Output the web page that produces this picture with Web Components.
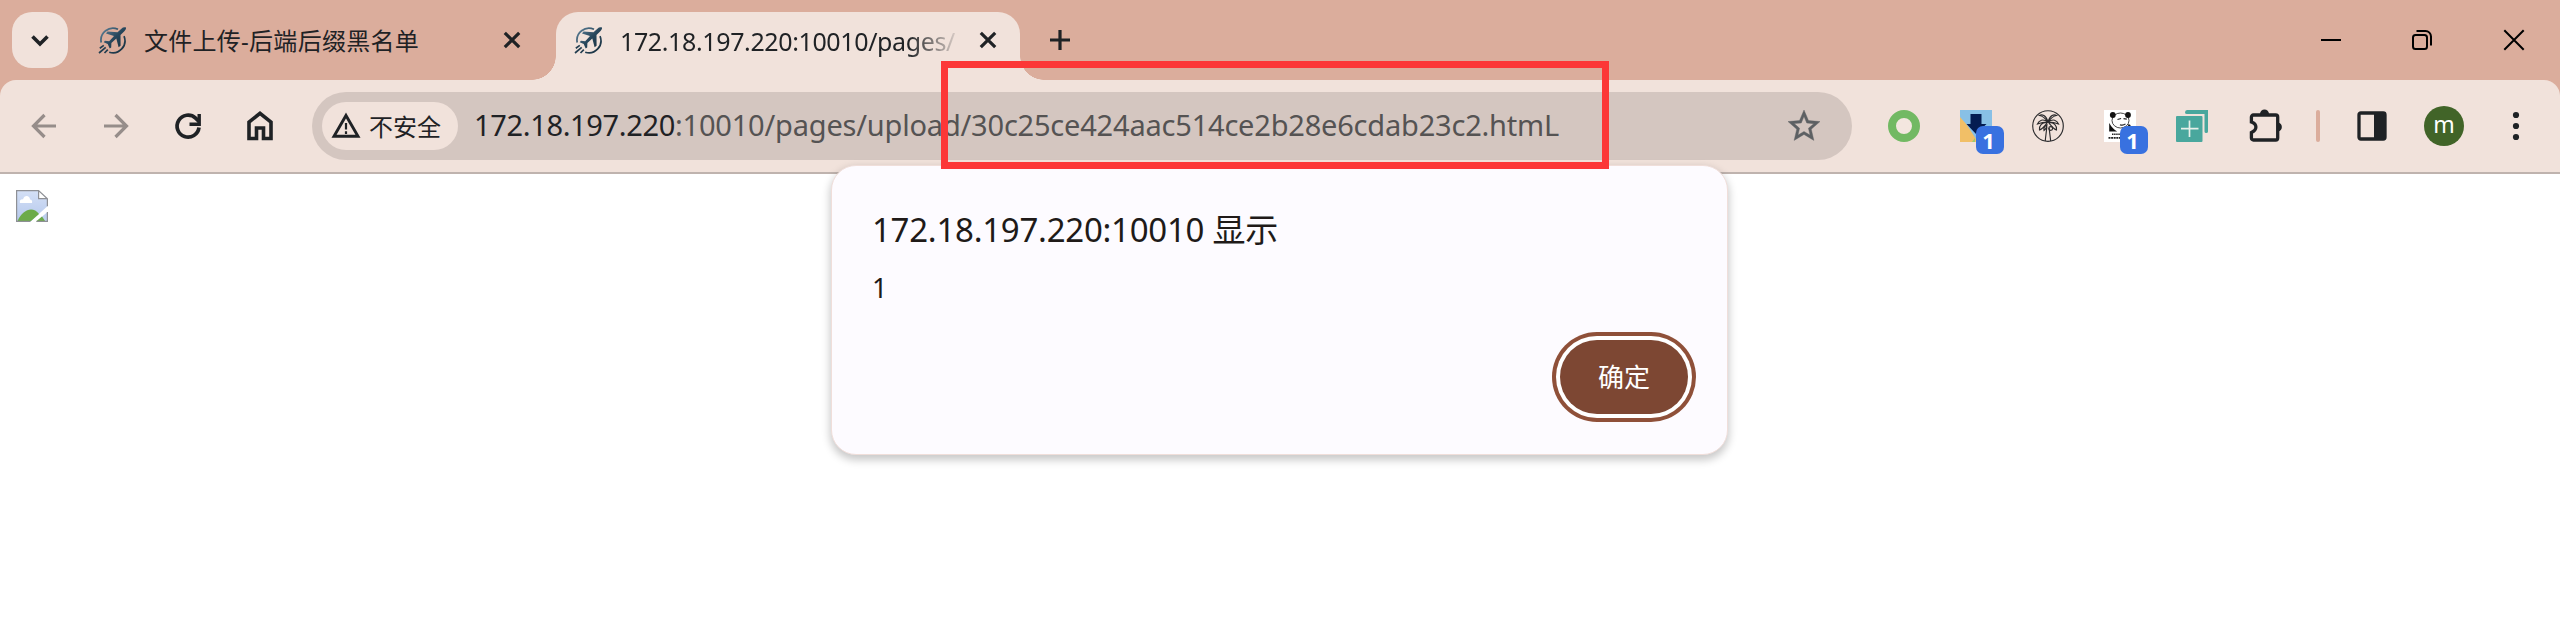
<!DOCTYPE html>
<html lang="zh-CN">
<head>
<meta charset="utf-8">
<title>172.18.197.220:10010/pages/upload</title>
<style>
html,body{margin:0;height:100%;overflow:hidden;background:#fff}
body{font-family:"Noto Sans","Noto Sans CJK SC",sans-serif;color:#1f2225}
</style>
</head>
<body>
<browser-window></browser-window>
<script>
function define(name, html, init) {
  customElements.define(name, class extends HTMLElement {
    constructor() {
      super();
      const t = document.createElement('template');
      t.innerHTML = html;
      this.attachShadow({mode: 'open'}).append(t.content.cloneNode(true));
    }
    connectedCallback() { if (init) init.call(this, this.shadowRoot); }
  });
}

/* Text tracked so that its line spans the given width */
define('fit-text', `<style>:host{display:inline-block;white-space:nowrap}span{display:inline-block;white-space:pre}</style><span></span>`, function (root) {
  const s = root.querySelector('span');
  s.textContent = this.getAttribute('text');
  const w = parseFloat(this.getAttribute('w'));
  const n = [...s.textContent].length;
  s.style.letterSpacing = (w - s.getBoundingClientRect().width) / n + 'px';
});

const icons = {
  chevron: ['0 0 32 32', '<path d="M8.500 12.500l7.500 7.500 7.500-7.500" fill="none" stroke="#1f2225" stroke-width="3.600"/>'],
  plane: ['0 0 28 28', '<defs><linearGradient id="g" x1="0" y1="0" x2="1" y2="1"><stop offset="0" stop-color="#5f8299"/><stop offset=".5" stop-color="#27465b"/><stop offset="1" stop-color="#18303f"/></linearGradient></defs><path d="M3.2 15.5A12 12 0 0 1 20 2.3M26 9.2A12 12 0 0 1 11.2 25.2" fill="none" stroke="url(#g)" stroke-width="1.7"/><path d="M28 .5c-1.700-.6-3.200-.2-4.600 1.200L19.500 5.300 9.500 4.600 8 6.400l8 2.700-4.800 5.200-4.300-.5-1.200 1.400 4 1.800 2 4.400 1.500-1 .2-4.400 4.900-4.500 2.300 8.700 2-1.500-.1-10.600 3.600-3.600C27.300 3.200 28.300 1.900 28 .5z" fill="url(#g)"/><path d="M5.800 18.400L1.800 21.200M7.700 20.400L1 26M9.800 22.600L6.500 26" stroke="#233e50" stroke-width="1.700"/>'],
  close: ['0 0 32 32', '<path d="M8.800 8.800l14.400 14.400M23.200 8.800L8.800 23.200" stroke="#1f2225" stroke-width="3.200"/>'],
  plus: ['0 0 32 32', '<path d="M16 6v20M6 16h20" stroke="#1f2225" stroke-width="3.200"/>'],
  min: ['0 0 32 32', '<path d="M7 16h20" stroke="#000" stroke-width="2"/>'],
  restore: ['0 0 32 32', '<g fill="none" stroke="#000" stroke-width="2"><rect x="7" y="11" width="14" height="14" rx="2.500"/><path d="M10.500 7H19.500a5.500 5.500 0 0 1 5.500 5.500V21.500"/></g>'],
  wclose: ['0 0 32 32', '<path d="M6.300 6.300l19.400 19.400M25.700 6.300L6.300 25.700" stroke="#000" stroke-width="2"/>'],
  back: ['0 0 32 32', '<path d="M28 16H6.500M16.500 5L5.500 16l11 11" fill="none" stroke="#968d8a" stroke-width="3.200"/>'],
  forward: ['0 0 32 32', '<path d="M4 16h21.500M15.500 5l11 11-11 11" fill="none" stroke="#968d8a" stroke-width="3.200"/>'],
  reload: ['0 0 32 32', '<path d="M27 17.500A11 11 0 1 1 23.600 8.100L27 11.500" fill="none" stroke="#1f2225" stroke-width="3.700"/><path d="M27.200 4v10.200H17.500" fill="none" stroke="#1f2225" stroke-width="3.400"/>'],
  home: ['0 0 32 32', '<path d="M5 28.500V12.200L16 3.300l11 8.900v16.300h-7.500V18h-7v10.500z" fill="none" stroke="#1f2225" stroke-width="3.600"/>'],
  warn: ['0 0 32 32', '<path d="M16 5.500L28 26.300H4z" fill="none" stroke="#1f2225" stroke-width="2.900"/><path d="M16 13v6.500M16 21.300v2.600" stroke="#1f2225" stroke-width="2.200"/>'],
  star: ['2 2 20 20', '<path d="M22 9.240l-7.190-.62L12 2 9.190 8.630 2 9.240l5.460 4.730L5.820 21 12 17.270 18.180 21l-1.630-7.030L22 9.240zM12 15.400l-3.760 2.270 1-4.280-3.320-2.880 4.380-.38L12 6.100l1.710 4.040 4.380.38-3.320 2.880 1 4.280L12 15.400z" fill="#5d6063" stroke="#5d6063" stroke-width=".25"/>'],
  ring: ['0 0 32 32', '<circle cx="16" cy="16" r="12" fill="#f3e6df" stroke="#72b963" stroke-width="8"/>'],
  download: ['0 0 32 32', '<path d="M0 0h32v32H0z" fill="#88c0e6"/><path d="M0 7l7 8 9 14v3H0z" fill="#f1bf67"/><path d="M10.500 4h11v10h5L16 24 6.500 14h4z" fill="#051c52"/><path d="M12 32l3-4v4z" fill="#9bcb72"/>'],
  palm: ['0 0 32 32', '<g fill="none" stroke="#2b2b2d" stroke-width="1.150"><circle cx="16" cy="16" r="15.300"/><path d="M13.200 31l1.700-14.500M18.700 31l-1.600-13M16 12C14 5 10 4 7.500 5.500 11 6 13 8 16 12zM16 12c2-7 6-8 8.500-6.500C21 6 19 8 16 12zM16 12C11 8.500 7 10 5.500 14 9 12.500 12 12 16 12zM16 12c5-3.500 9-2 10.500 2C23 12.500 20 12 16 12zM15.500 12.500C10 12 7 15.500 7.500 20c3-1 5-4 8-7.500zM16.500 12.500C22 12 25 15.500 24.500 20c-3-1-5-4-8-7.500zM15 15c-2.500 1-3.500 3-3 5.500 1.500-1 2.500-2.500 3-5.500z"/><circle cx="18.700" cy="18.500" r="1.900"/></g>'],
  panda: ['0 0 32 32', '<path d="M0 0h32v32H0z" fill="#fff"/><path d="M5.200 13c1.500 2 2.500 5 8 8.500H5.200zM24.500 14l2 1v6h-4z" fill="#111"/><ellipse cx="16.500" cy="10.500" rx="8.500" ry="7.500" fill="#fff" stroke="#333" stroke-width=".9"/><circle cx="8.800" cy="5" r="2.900" fill="#111"/><circle cx="24" cy="5" r="2.900" fill="#111"/><path d="M13.500 9.500l3.600-1M19.500 8.700l3.300.5M16 14.700c2 .9 4 .4 5.500-.8" stroke="#222" stroke-width="1.200" fill="none"/><path d="M8 24.300h8" stroke="#222" stroke-width="1.600" stroke-dasharray="1.500 .6"/><path d="M4.500 27.800H16" stroke="#222" stroke-width="1.800" stroke-dasharray="2 .6"/>'],
  teal: ['0 0 32 32', '<rect y="6" width="26.500" height="26" rx="1" fill="#49a79d"/><path d="M13.500 10.500v16.500M5 18.700h17.500" stroke="#e7efe9" stroke-width="1.700"/><path d="M9 2.500Q9 0 11 0H32V21.500Q32 23 30.300 23 28.500 23 28.500 21.500V4H11Q9 4 9 2.500z" fill="#49a79d"/>'],
  puzzle: ['0 0 34 34', '<path d="M4.400 7h22.300a2 2 0 0 1 2 2v21a2 2 0 0 1-2 2H4.400a2 2 0 0 1-2-2v-5.500c6-2.500 6-8.500 0-10.500V9a2 2 0 0 1 2-2z" fill="none" stroke="#1f2225" stroke-width="3.300"/><path d="M11 6a4.500 4.500 0 0 1 9 0zM29.500 14.500a4.700 4.700 0 0 1 0 9z" fill="#1f2225"/>'],
  panel: ['0 0 32 32', '<rect x="3" y="3" width="26" height="26" rx="1.800" fill="none" stroke="#1f2225" stroke-width="3.300"/><path d="M18 3h11v26H18z" fill="#1f2225"/>'],
  menu: ['0 0 32 32', '<g fill="#1f2225"><circle cx="16" cy="5" r="3.100"/><circle cx="16" cy="16" r="3.100"/><circle cx="16" cy="27" r="3.100"/></g>'],
  broken: ['0 0 32 32', '<defs><linearGradient id="s" x1="0" y1="0" x2="0" y2="1"><stop stop-color="#d4e0f6"/><stop offset="1" stop-color="#b5c8ec"/></linearGradient></defs><path d="M.6.600h22L31.400 8.700v7.500L14.500 31.400H.6z" fill="url(#s)"/><path d="M31.400 22v9.400H20.500z" fill="#bfd0ee"/><path d="M1.500 31C7 19 17 16 23 24L15 31z" fill="#6cab49"/><path d="M20 31.400l6-5 3.500 5z" fill="#6cab49"/><path d="M4 13c-1-3.500 2.500-4 3-3.500 1-5 7-4.500 7 0 2 0 2.500 2 2 3.500z" fill="#fff"/><path d="M22.600.600V8.700h8.800z" fill="#fff"/><path d="M14.500 31.400H.6V.600h22L31.400 8.700v7.500M22.600.600V8.700h8.800M31.400 22v9.400H20.500" fill="none" stroke="#8e9095" stroke-width="1.200"/>']
};
define('ui-icon', `<style>:host{display:block;width:32px;height:32px;flex:none}svg{display:block;width:100%;height:100%}</style><svg></svg>`, function (root) {
  const [box, art] = icons[this.getAttribute('name')];
  const svg = root.querySelector('svg');
  svg.setAttribute('viewBox', box);
  svg.innerHTML = art;
});

define('browser-tab', `<style>
:host{display:flex;align-items:center;position:relative;height:56px;box-sizing:border-box;font-size:24px;line-height:32px;margin-bottom:12px}
:host([active]){background:#f1e2db;border-radius:22px 22px 0 0;height:68px;margin-bottom:0;padding-bottom:12px}
:host([active])::before,:host([active])::after{content:"";position:absolute;bottom:0;width:24px;height:24px}
:host([active])::before{left:-24px;background:radial-gradient(circle at 0 0,transparent 23.500px,#f1e2db 24px)}
:host([active])::after{right:-24px;background:radial-gradient(circle at 100% 0,transparent 23.500px,#f1e2db 24px)}
.i{width:28px;height:28px;margin:1px 18px 0 0}
.t{flex:1;overflow:hidden;white-space:nowrap;padding-top:2px}
:host([active]) .t{font-size:25px;padding-top:1px;-webkit-mask-image:linear-gradient(90deg,#000 288px,transparent 342px)}
.x{margin:0 16px 0 14px}
</style><ui-icon class="i" name="plane"></ui-icon><div class="t"><slot></slot></div><ui-icon class="x" name="close"></ui-icon>`);

define('tab-strip', `<style>
:host{display:flex;height:80px;box-sizing:border-box;padding-top:12px;background:#dbad9c}
.search{display:grid;place-items:center;width:56px;height:56px;border-radius:20px;background:#f1e2db;margin:0 30px 0 12px}
.one{width:446px;margin-right:12px}.two{width:464px;box-sizing:border-box;padding-left:18px}
.new{margin:12px 0 0 24px}
.win{display:flex;gap:60px;margin:12px 30px 0 auto}
</style>
<div class="search"><ui-icon name="chevron"></ui-icon></div>
<browser-tab class="one"><fit-text text="文件上传-后端后缀黑名单" w="275"></fit-text></browser-tab>
<browser-tab class="two" active><fit-text text="172.18.197.220:10010/pages/" w="335"></fit-text></browser-tab>
<ui-icon class="new" name="plus"></ui-icon>
<div class="win"><ui-icon name="min"></ui-icon><ui-icon name="restore"></ui-icon><ui-icon name="wclose"></ui-icon></div>`);

define('address-bar', `<style>
:host{display:flex;align-items:center;box-sizing:border-box;width:1540px;height:68px;border-radius:34px;background:#d4c6c0;padding:0 32px 0 10px;line-height:40px}
.chip{display:flex;align-items:center;box-sizing:border-box;width:136px;height:48px;border-radius:24px;background:#f1e2db;padding-left:8px;gap:7px;font-size:24px;margin-right:16px}
.chip span{padding-top:2px}
.url{font-size:29px;display:flex;padding-bottom:3px}
.path{color:#555353}
ui-icon{margin-left:auto}
.chip ui-icon{margin-left:0}
</style>
<div class="chip"><ui-icon name="warn"></ui-icon><span>不安全</span></div>
<div class="url"><fit-text text="172.18.197.220" w="201"></fit-text><fit-text class="path" text=":10010/pages/upload/30c25ce424aac514ce2b28e6cdab23c2.htmL" w="884"></fit-text></div>
<ui-icon name="star"></ui-icon>`);

define('extension-icon', `<style>
:host{display:block;position:relative;width:32px;height:32px}
.b{position:absolute;left:16px;top:16px;width:28px;height:28px;border-radius:7px;background:#3871e0;color:#fff;font:bold 22px/28px "Noto Sans",sans-serif;text-align:center;text-indent:-3px}
.b:empty{display:none}
</style><div class="b"></div>`, function (root) {
  const i = document.createElement('ui-icon');
  i.setAttribute('name', this.getAttribute('name'));
  const b = root.querySelector('.b');
  b.before(i);
  b.textContent = this.getAttribute('badge') || '';
});

define('tool-bar', `<style>
:host{display:block;background:#dbad9c}
.bar{display:flex;align-items:center;height:94px;box-sizing:border-box;background:#f1e2db;border-radius:16px 16px 0 0;box-shadow:inset 0 -2px #bfb3ae;padding-bottom:2px}
.nav{display:flex;gap:40px;margin:0 36px 0 28px}
.ext{display:flex;gap:40px;margin-left:36px}
.puzzle{width:34px;height:34px;margin:-3px 0 0 41px}
.div{width:4px;height:32px;border-radius:2px;background:#dbad9c;margin:0 36px 0 33px}
.me{width:40px;height:40px;border-radius:50%;background:#416428;color:#fff;font:23px/36px "Noto Sans",sans-serif;text-align:center;margin:0 36px}
</style><div class="bar">
<div class="nav"><ui-icon name="back"></ui-icon><ui-icon name="forward"></ui-icon><ui-icon name="reload"></ui-icon><ui-icon name="home"></ui-icon></div>
<address-bar></address-bar>
<div class="ext"><extension-icon name="ring"></extension-icon><extension-icon name="download" badge="1"></extension-icon><extension-icon name="palm"></extension-icon><extension-icon name="panda" badge="1"></extension-icon><extension-icon name="teal"></extension-icon></div>
<ui-icon class="puzzle" name="puzzle"></ui-icon><div class="div"></div><ui-icon name="panel"></ui-icon><div class="me">m</div><ui-icon name="menu"></ui-icon>
</div>`);

define('alert-dialog', `<style>
:host{display:flex;flex-direction:column;box-sizing:border-box;width:897px;height:290px;padding:44px 31px 0 40px;border:1px solid #f0deda;border-radius:25px;background:#fdfbff;color:#201a18;box-shadow:0 4px 8px 1px rgba(0,0,0,.22)}
.h{font-size:33px;line-height:40px}
.m{font-size:27px;line-height:34px;margin-top:21px}
button{align-self:flex-end;width:128px;height:74px;margin:35px 8px 0 0;border:0;border-radius:37px;background:#7d4733;box-shadow:0 0 0 4px #fff,0 0 0 8px #8f5039;color:#fff;font:26px/32px "Noto Sans","Noto Sans CJK SC",sans-serif;padding:0}
</style><div class="h"><slot name="title"></slot></div><div class="m"><slot></slot></div><button>确定</button>`);

define('browser-window', `<style>
:host{display:block;position:relative;width:2560px;height:644px;overflow:hidden;background:#fff}
.page{padding:16px}
alert-dialog{position:absolute;left:831px;top:165px}
.mark{position:absolute;left:941px;top:61px;width:668px;height:108px;box-sizing:border-box;border:7px solid #fc3737}
</style>
<tab-strip></tab-strip><tool-bar></tool-bar>
<div class="page"><ui-icon name="broken"></ui-icon></div>
<alert-dialog><fit-text slot="title" text="172.18.197.220:10010 显示" w="406"></fit-text>1</alert-dialog>
<div class="mark"></div>`);
</script>
</body>
</html>
